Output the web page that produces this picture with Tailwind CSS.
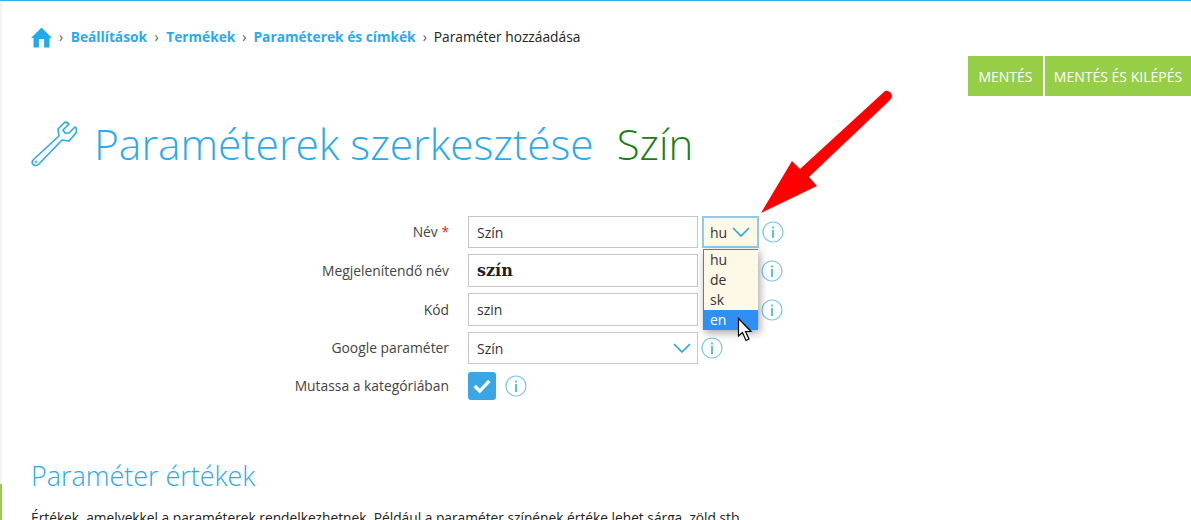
<!DOCTYPE html>
<html lang="en">
<head>
  <meta charset="UTF-8" />
  <title>Paraméter hozzáadása</title>
  <script src="https://cdn.jsdelivr.net/npm/@tailwindcss/browser@4"></script>
</head>
<body class="bg-white font-['Open_Sans',sans-serif] text-[#222] h-[520px] w-[1191px] overflow-hidden relative">

<!-- top line and left strip -->
<div class="h-px bg-[#29b6f0]"></div>
<div class="absolute left-0 top-px w-[2px] h-[519px] bg-[#f3f3f3]"><div class="mt-[483px] h-[36px] bg-[#96ce47]"></div></div>

<div class="pl-[31px]">
  <!-- breadcrumb -->
  <div class="flex items-center h-[20px] mt-[26px] text-[13.75px] text-[#222]">
    <svg class="w-[21px] h-[21px] mr-[7px]" viewBox="0 0 20 20"><path fill="#1fa9ef" d="M10 .5 L20 10.5 H17.6 V19.5 H12.5 V11.5 H7.5 V19.5 H2.4 V10.5 H0 Z"/></svg>
    <span class="text-[#555] mr-[7.5px]">›</span>
    <a class="font-bold text-[#29aaec]">Beállítások</a>
    <span class="text-[#555] mx-[7.5px]">›</span>
    <a class="font-bold text-[#29aaec]">Termékek</a>
    <span class="text-[#555] mx-[7px]">›</span>
    <a class="font-bold text-[#29aaec]">Paraméterek és címkék</a>
    <span class="text-[#555] mx-[7px]">›</span>
    <span>Paraméter hozzáadása</span>
  </div>

  <!-- buttons -->
  <div class="flex justify-end gap-[2px] mt-[9px]">
    <button class="h-[40px] w-[75px] bg-[#96ce47] text-white text-[14px] font-medium">MENTÉS</button>
    <button class="h-[40px] w-[146px] bg-[#96ce47] text-white text-[14px] font-medium">MENTÉS ÉS KILÉPÉS</button>
  </div>

  <!-- title -->
  <div class="flex items-center h-[60px] mt-[18px]">
    <svg class="w-[46px] h-[46px] mr-[17px]" viewBox="0 0 46 46" fill="none" stroke="#29aaec" stroke-width="1.6" stroke-linejoin="round"><path d="M33 2 L27 8 L28 15 L3 38 C0 41 1 43 3 44 C5 45 7 44 8 43 L31 19 L38 20 L45 12 C46 8 45 6 44 6 L38 12 L34 12 L32 9 L38 3 C36 1 34 1 33 2 Z"/><circle cx="5" cy="41" r="1" stroke-width="1"/></svg>
    <h1 class="text-[42.5px] font-light text-[#29aaec] leading-none">Paraméterek szerkesztése</h1>
    <span class="text-[42px] font-light text-[#178017] leading-none ml-[23px]">Szín</span>
  </div>

  <!-- form -->
  <div class="mt-[42px] flex flex-col text-[13.85px]">
    <div class="flex items-center h-[32px] mb-[6px]">
      <label class="w-[418px] text-right text-[#444]">Név <span class="text-[#d9292c]">*</span></label>
      <input value="Szín" class="ml-[19px] w-[230px] h-[32px] border border-[#c6c6c6] px-[8px] text-[14px] text-[#333]" />
      <div class="ml-[4px] w-[57px] h-[32px] border-2 border-[#8ecbf0] bg-[#fdf9e6] flex items-center pl-[6px] gap-[5px] text-[14px] text-[#333]">hu
        <svg class="w-[18px] h-[10px]" viewBox="0 0 18 10" fill="none" stroke="#1fa9d8" stroke-width="1.6"><path d="M1 1 L9 9 L17 1"/></svg>
      </div>
      <svg class="ml-[3px] w-[22px] h-[22px]" viewBox="0 0 22 22"><circle cx="11" cy="11" r="10" fill="none" stroke="#7cc4f2" stroke-width="1.2"/><rect x="10.2" y="9" width="1.6" height="8" fill="#29b6f0"/><rect x="10.2" y="5.5" width="1.6" height="2" fill="#29b6f0"/></svg>
    </div>
    <div class="flex items-center h-[33px] mb-[6px]">
      <label class="w-[418px] text-right text-[#444] pt-[1px]">Megjelenítendő név</label>
      <div class="ml-[19px] w-[230px] h-[33px] border border-[#c6c6c6] px-[8px] flex items-center text-[16px] font-bold font-['DejaVu_Serif',serif] text-[#222]">szín</div>
      <svg class="ml-[63px] w-[22px] h-[22px]" viewBox="0 0 22 22"><circle cx="11" cy="11" r="10" fill="none" stroke="#7cc4f2" stroke-width="1.2"/><rect x="10.2" y="9" width="1.6" height="8" fill="#29b6f0"/><rect x="10.2" y="5.5" width="1.6" height="2" fill="#29b6f0"/></svg>
    </div>
    <div class="flex items-center h-[33px] mb-[6px]">
      <label class="w-[418px] text-right text-[#444] pt-[1px]">Kód</label>
      <input value="szin" class="ml-[19px] w-[230px] h-[33px] border border-[#c6c6c6] px-[8px] text-[14px] text-[#333]" />
      <svg class="ml-[63px] w-[22px] h-[22px]" viewBox="0 0 22 22"><circle cx="11" cy="11" r="10" fill="none" stroke="#7cc4f2" stroke-width="1.2"/><rect x="10.2" y="9" width="1.6" height="8" fill="#29b6f0"/><rect x="10.2" y="5.5" width="1.6" height="2" fill="#29b6f0"/></svg>
    </div>
    <div class="flex items-center h-[32px] mb-[7px]">
      <label class="w-[418px] text-right text-[#444]">Google paraméter</label>
      <div class="ml-[19px] w-[230px] h-[32px] border border-[#c6c6c6] pl-[8px] pr-[6px] flex items-center justify-between text-[14px] text-[#333]">Szín
        <svg class="w-[18px] h-[10px]" viewBox="0 0 18 10" fill="none" stroke="#1fa9d8" stroke-width="1.6"><path d="M1 1 L9 9 L17 1"/></svg>
      </div>
      <svg class="ml-[3px] w-[22px] h-[22px]" viewBox="0 0 22 22"><circle cx="11" cy="11" r="10" fill="none" stroke="#7cc4f2" stroke-width="1.2"/><rect x="10.2" y="9" width="1.6" height="8" fill="#29b6f0"/><rect x="10.2" y="5.5" width="1.6" height="2" fill="#29b6f0"/></svg>
    </div>
    <div class="flex items-center h-[30px]">
      <label class="w-[418px] text-right text-[#444] pt-[1px]">Mutassa a kategóriában</label>
      <div class="ml-[19px] w-[28px] h-[28px] rounded-[3px] bg-[#3aa7e4] flex items-center justify-center">
        <svg class="w-[18px] h-[16px]" viewBox="0 0 16 14" fill="none" stroke="#fff" stroke-width="3"><path d="M1.5 7 L6 11.5 L14.5 2.5"/></svg>
      </div>
      <svg class="ml-[9px] w-[22px] h-[22px]" viewBox="0 0 22 22"><circle cx="11" cy="11" r="10" fill="none" stroke="#7cc4f2" stroke-width="1.2"/><rect x="10.2" y="9" width="1.6" height="8" fill="#29b6f0"/><rect x="10.2" y="5.5" width="1.6" height="2" fill="#29b6f0"/></svg>
    </div>
  </div>

  <h2 class="mt-[58px] text-[26.9px] font-light text-[#29aaec] leading-[34px]">Paraméter értékek</h2>
  <p class="mt-[15px] text-[13.75px] text-[#222] leading-[20px] whitespace-nowrap">Értékek, amelyekkel a paraméterek rendelkezhetnek. Például a paraméter színének értéke lehet sárga, zöld stb.</p>
</div>

<!-- open dropdown list -->
<ul class="absolute left-[703px] top-[249px] w-[55px] h-[81px] bg-[#fdf9e6] border-l border-t border-[#777] shadow-[2px_3px_8px_rgba(0,0,0,0.35)] text-[14px] leading-[20px] text-[#333]">
  <li class="pl-[6px]">hu</li>
  <li class="pl-[6px]">de</li>
  <li class="pl-[6px]">sk</li>
  <li class="pl-[6px] bg-[#2e90f5] text-white">en</li>
</ul>

<!-- mouse pointer -->
<svg class="absolute left-[737px] top-[317px] w-[17px] h-[26px]" viewBox="0 0 17 26"><path d="M1.5 1.5 V19 L5.5 15.5 L9 23.5 L12 22 L8.5 14.5 H14 Z" fill="#fff" stroke="#000" stroke-width="1.2"/></svg>

<!-- red arrow -->
<svg class="absolute left-[755px] top-[85px] w-[145px] h-[135px]" viewBox="755 85 145 135"><path d="M761 213 L792 161 L800 169 L885 91 C888 90 892 93 892 96 C892 98 890 100 888 102 L809 177 L817 186 Z" fill="#ff0000"/></svg>

</body>
</html>
